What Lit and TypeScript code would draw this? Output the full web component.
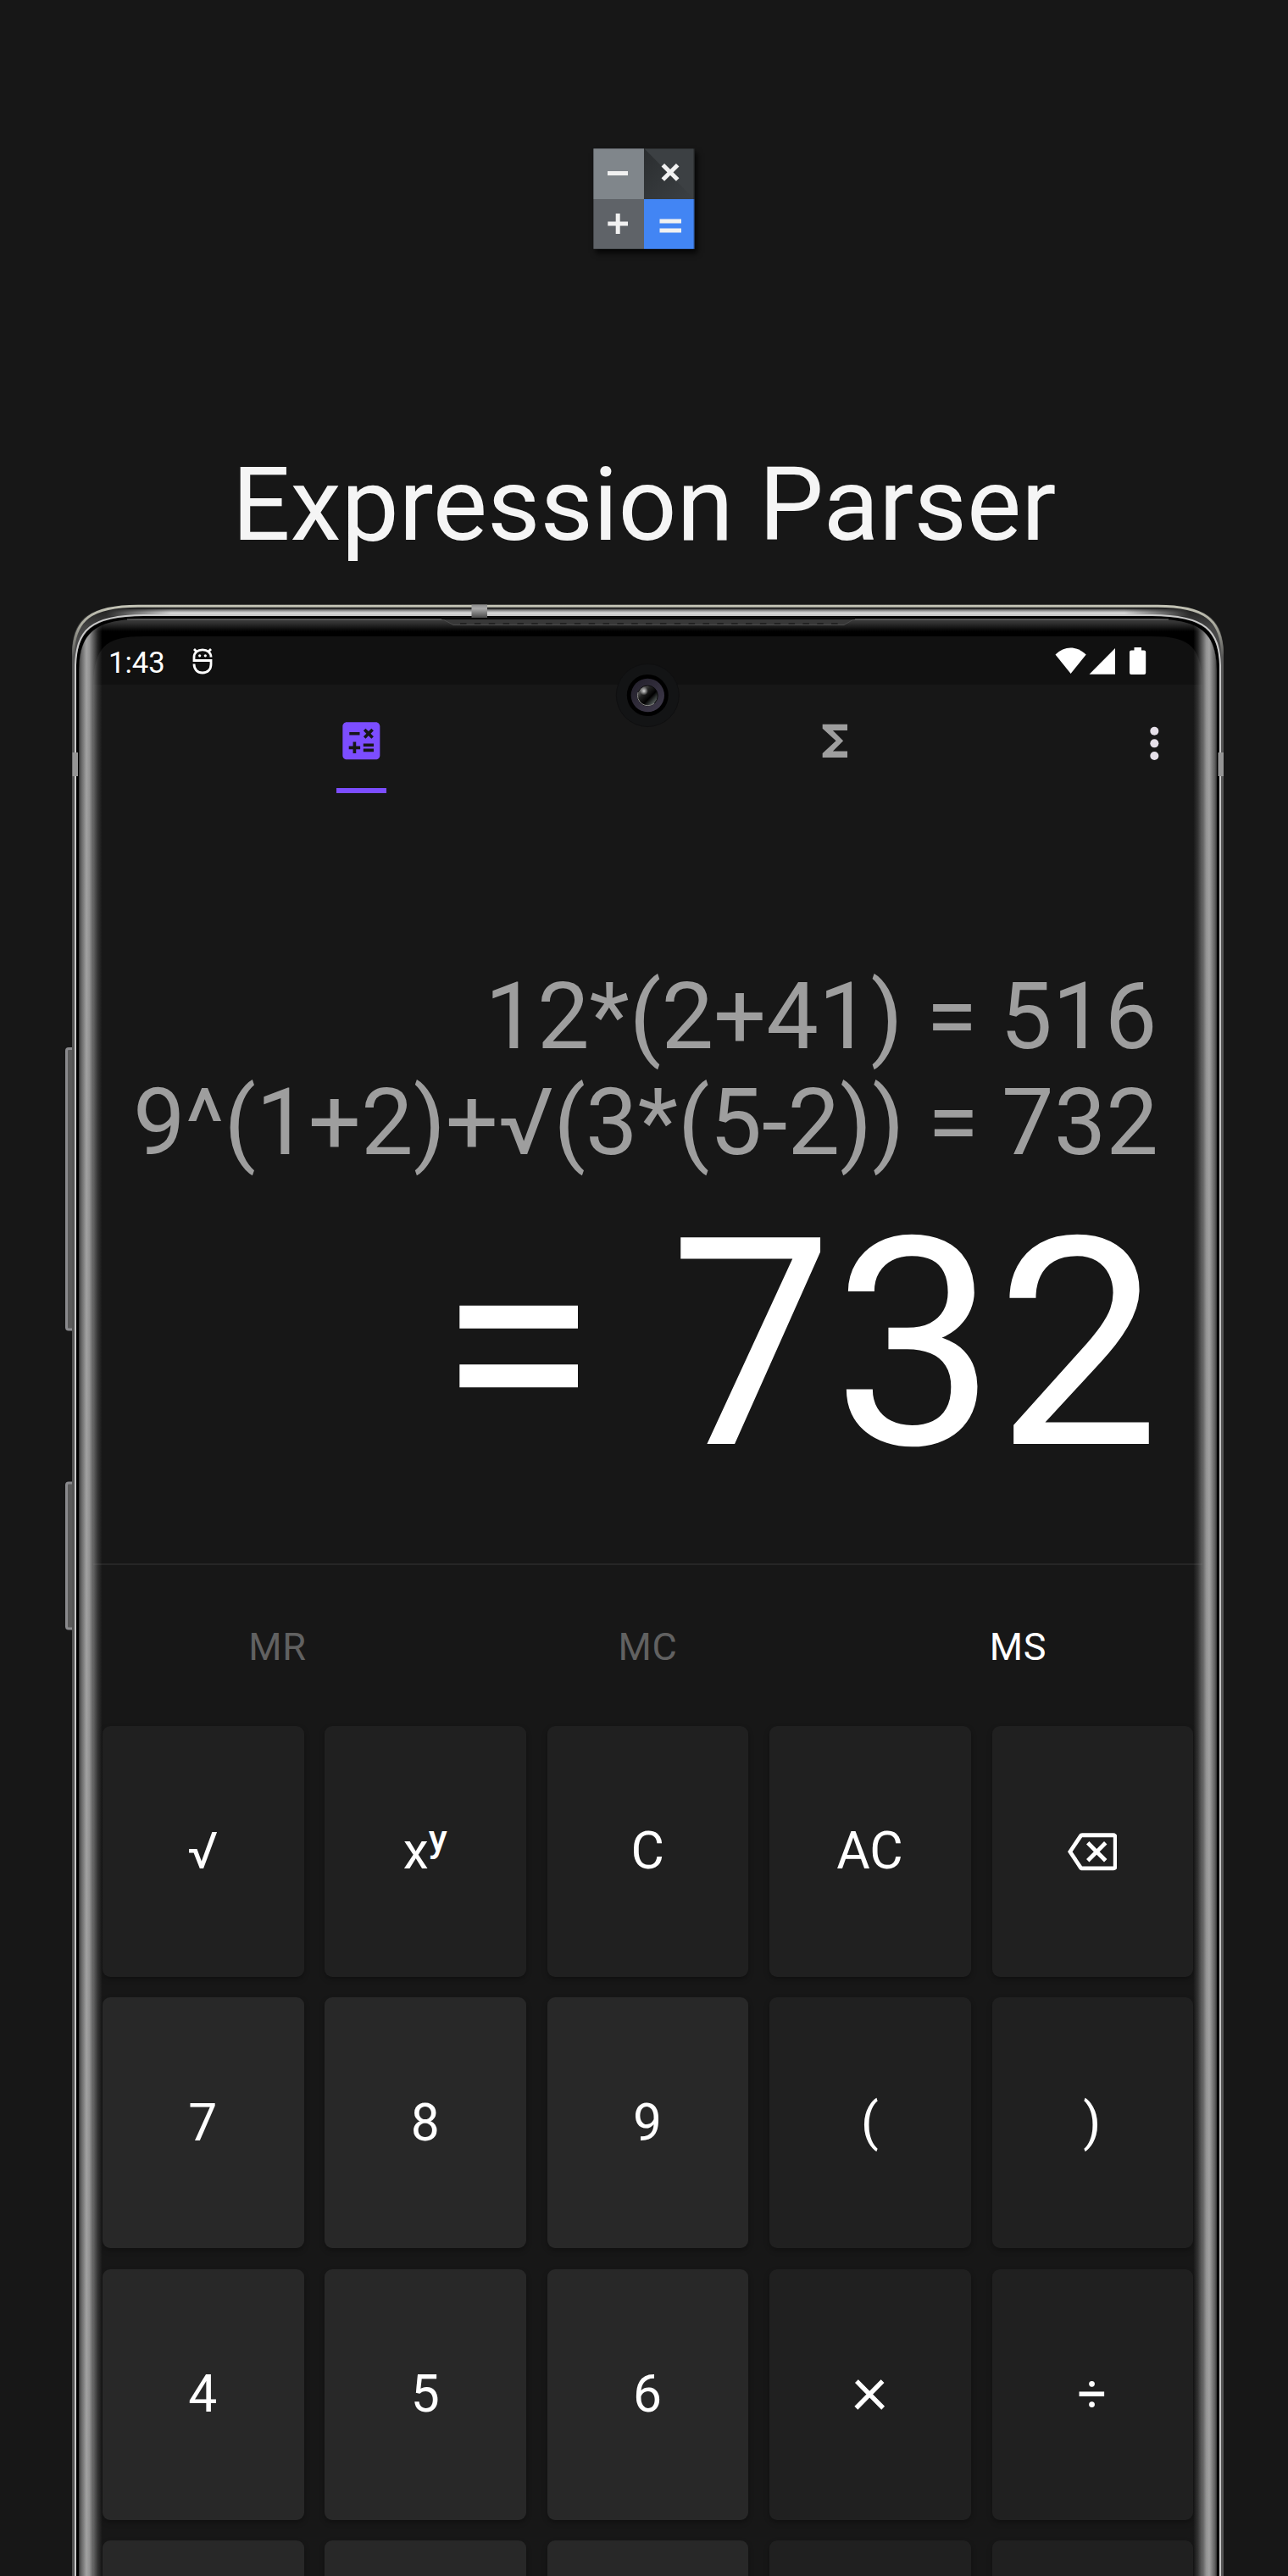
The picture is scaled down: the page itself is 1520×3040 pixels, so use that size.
import { LitElement, html, css, svg, nothing, type TemplateResult } from "lit";
import { customElement, property } from "lit/decorators.js";
import { classMap } from "lit/directives/class-map.js";

type Key = { label?: string; icon?: string; number?: boolean; power?: boolean; large?: boolean };

const KEYS: Key[] = [
  { label: "√" },
  { power: true },
  { label: "C" },
  { label: "AC" },
  { icon: "backspace" },
  { label: "7", number: true },
  { label: "8", number: true },
  { label: "9", number: true },
  { label: "(" },
  { label: ")" },
  { label: "4", number: true },
  { label: "5", number: true },
  { label: "6", number: true },
  { label: "×", large: true },
  { label: "÷" },
  { number: true },
  { number: true },
  { number: true },
  {},
  {},
];

const ICONS: Record<string, TemplateResult> = {
  calculator: svg`<path d="M19,3H5C3.89,3 3,3.89 3,5V19C3,20.1 3.9,21 5,21H19C20.1,21 21,20.1 21,19V5C21,3.9 20.1,3 19,3M13.03,7.06L14.09,6L15.5,7.41L16.91,6L17.97,7.06L16.56,8.47L17.97,9.88L16.91,10.94L15.5,9.53L14.09,10.94L13.03,9.88L14.44,8.47L13.03,7.06M6.25,7.72H11.25V9.22H6.25V7.72M11.5,16H9.5V18H8V16H6V14.5H8V12.5H9.5V14.5H11.5V16M18,17.25H13V15.75H18V17.25M18,14.75H13V13.25H18V14.75Z"/>`,
  sigma: svg`<path d="M18 4H6v2l6.5 6L6 18v2h12v-3h-7l5-5-5-5h7z"/>`,
  more: svg`<circle cx="12" cy="6" r="2.05"/><circle cx="12" cy="12" r="2.05"/><circle cx="12" cy="18" r="2.05"/>`,
  backspace: svg`<path d="M19,15.59L17.59,17L14,13.41L10.41,17L9,15.59L12.59,12L9,8.41L10.41,7L14,10.59L17.59,7L19,8.41L15.41,12L19,15.59M22,3A2,2 0 0,1 24,5V19A2,2 0 0,1 22,21H7C6.31,21 5.77,20.64 5.41,20.11L0,12L5.41,3.88C5.77,3.35 6.31,3 7,3H22M22,5H7L2.28,12L7,19H22V5Z"/>`,
};

@customElement("ui-icon")
class UiIcon extends LitElement {
  @property() name = "";
  static styles = css`
    :host { display: block; width: 58.7px; height: 58.7px; }
    .glyph { display: block; width: 100%; height: 100%; fill: currentColor; }
  `;
  render() {
    return html`<svg class="glyph" viewBox="0 0 24 24">${ICONS[this.name] ?? nothing}</svg>`;
  }
}

@customElement("app-logo")
class AppLogo extends LitElement {
  static styles = css`
    :host { display: block; flex: none; width: 119.4px; height: 119.4px; box-shadow: 3px 5px 6px rgba(0, 0, 0, 0.75); }
    .art { display: block; width: 100%; height: 100%; }
  `;
  render() {
    return html`<svg class="art" viewBox="0 0 119.4 119.4">
      <defs>
        <linearGradient id="fold" x1="0" y1="0" x2="1" y2="1">
          <stop offset="0" stop-color="#2a2d2f" /><stop offset="1" stop-color="#3c4043" />
        </linearGradient>
      </defs>
      <rect width="60" height="60" fill="#80868b" />
      <rect x="60" width="59.4" height="60" fill="#3c4043" />
      <path d="M60 0L119.4 60H60Z" fill="url(#fold)" />
      <rect y="60" width="60" height="59.4" fill="#5f6368" />
      <rect x="60" y="60" width="59.4" height="59.4" fill="#4285f4" />
      <path d="M0 .5H119.4M0 118.9H119.4M.5 0V119.4M118.9 0V119.4" stroke="#000" stroke-opacity=".3" />
      <g stroke="#f1f1f1" stroke-width="5" fill="none">
        <path d="M17 29.5H41" />
        <path d="M82.3 19.7L99.7 37.1M99.7 19.7L82.3 37.1" />
        <path d="M17.3 89H41M29.2 77V101" />
        <path d="M78.5 86H104M78.5 97H104" />
      </g>
    </svg>`;
  }
}

@customElement("status-bar")
class StatusBar extends LitElement {
  static styles = css`
    :host {
      display: flex; align-items: flex-start; box-sizing: border-box; height: 57px;
      padding: 12px 67px 0 19px; background: #111; color: #fff;
      font: 34.6px/40px Roboto, sans-serif;
    }
    .time { margin-top: -1px; }
    .debug { width: 24px; height: 32px; margin-left: 32px; margin-top: 1px; }
    .system { display: block; width: 108px; height: 34px; margin-left: auto; }
  `;
  render() {
    return html`
      <span class="time">1:43</span>
      <svg class="debug" viewBox="0 0 24 32" fill="none" stroke="#fff" stroke-width="2.8">
        <path d="M2 2L5 5M22 2L19 5" />
        <path d="M22 11.5C22 6.5 18 2.8 12 2.8S2 6.5 2 11.5V15.5H22V20C22 26 18 30 12 30S2 26 2 19.5" />
        <circle cx="8.7" cy="9.8" r="1.6" fill="#fff" stroke="none" />
        <circle cx="15.3" cy="9.8" r="1.6" fill="#fff" stroke="none" />
      </svg>
      <svg class="system" viewBox="0 0 108 34" fill="#fff">
        <path d="M0.5 9.5C11 -1.2 26 -1.2 36.7 9.5L18.6 32Z" />
        <path d="M40.5 32.7L71 2V32.7Z" />
        <path d="M90 4.5h3.5V1h8.5V4.5h3.2a2 2 0 0 1 2 2V31a2 2 0 0 1-2 2H90a2 2 0 0 1-2-2V6.5a2 2 0 0 1 2-2Z" />
      </svg>`;
  }
}

@customElement("key-pad")
class KeyPad extends LitElement {
  static styles = css`
    :host {
      display: grid; grid-template-columns: repeat(5, 237.6px); grid-auto-rows: 296px;
      gap: 24.4px 24.8px; padding: 0 12px;
      color: #fff; font: 60.5px/70px Roboto, sans-serif;
    }
    .key {
      display: flex; align-items: center; justify-content: center; border-radius: 9px;
      background: #202020; box-shadow: 0 3px 6px rgba(0, 0, 0, 0.3); box-sizing: border-box; padding-right: 1px;
    }
    .number { background: #282828; padding-top: 1px; }
    .large { padding-bottom: 11px; font-size: 80px; font-weight: 300; -webkit-text-stroke: 1px #fff; }
    .exponent { font-size: 45px; font-weight: 500; line-height: 0; vertical-align: 20px; }
  `;
  render() {
    return html`${KEYS.map(
      (k) => html`<div class=${classMap({ key: true, number: !!k.number, large: !!k.large })}>
        ${k.power ? html`<span>x<span class="exponent">y</span></span>` : nothing}
        ${k.icon ? html`<ui-icon name=${k.icon}></ui-icon>` : nothing}
        ${k.label ? html`<span>${k.label}</span>` : nothing}
      </div>`
    )}`;
  }
}

@customElement("device-frame")
class DeviceFrame extends LitElement {
  static styles = css`
    :host { display: block; pointer-events: none; }
    .art { display: block; width: 1380px; height: 2340px; }
  `;
  private side() {
    return svg`
      <rect x="93" y="730" width="30" height="2310" fill="url(#edge)" />
    `;
  }
  render() {
    const W = 1529;
    const shape = (x: number, y: number, cx: number, cy: number, ex: number, ey: number) =>
      `M${x} 3050V${y}C${x + 1.5} ${y - cy} ${x + cx} ${ey} ${ex} ${ey}H${W - ex}C${W - x - cx} ${ey} ${W - x - 1.5} ${y - cy} ${W - x} ${y}V3050`;
    const outer = shape(85, 768, 20, 38, 162, 713.5);
    const rim = shape(86.5, 770, 20, 38, 163, 715.3);
    const inner = shape(89, 785, 16, 40, 170, 726);
    const glass = shape(93, 790, 17, 42, 170, 730.5);
    return html`<svg class="art" viewBox="70 700 1380 2340">
      <defs>
        <linearGradient id="edge">
          <stop offset="0" stop-color="#333" />
          <stop offset=".07" stop-color="#5c5c5c" />
          <stop offset=".3" stop-color="#a2a2a2" />
          <stop offset=".42" stop-color="#9a9a9a" stop-opacity=".95" />
          <stop offset=".58" stop-color="#8a8a8a" stop-opacity=".65" />
          <stop offset=".75" stop-color="#888" stop-opacity=".25" />
          <stop offset=".92" stop-color="#888" stop-opacity="0" />
        </linearGradient>
        <linearGradient id="rim" gradientUnits="userSpaceOnUse" x1="0" y1="713" x2="0" y2="775">
          <stop offset="0" stop-color="#c6c6b8" /><stop offset=".4" stop-color="#aaaa9e" />
          <stop offset="1" stop-color="#555" />
        </linearGradient>
        <linearGradient id="body" gradientUnits="userSpaceOnUse" x1="0" y1="716" x2="0" y2="775">
          <stop offset="0" stop-color="#1c1c1c" /><stop offset=".4" stop-color="#444" />
          <stop offset="1" stop-color="#505050" />
        </linearGradient>
        <linearGradient id="silver" x2="0" y2="1">
          <stop offset="0" stop-color="#4a4a4a" /><stop offset=".3" stop-color="#a0a0a0" />
          <stop offset=".55" stop-color="#d6d6d6" /><stop offset="1" stop-color="#cacaca" />
        </linearGradient>
        <linearGradient id="fade" gradientUnits="userSpaceOnUse" x1="125" y1="0" x2="1404" y2="0">
          <stop offset="0" stop-color="#000" /><stop offset=".06" stop-color="#fff" />
          <stop offset=".94" stop-color="#fff" /><stop offset="1" stop-color="#000" />
        </linearGradient>
        <linearGradient id="bezel" gradientUnits="userSpaceOnUse" x1="0" y1="731" x2="0" y2="745">
          <stop offset="0" stop-color="#3c3c3c" /><stop offset=".3" stop-color="#303030" />
          <stop offset="1" stop-color="#000" />
        </linearGradient>
        <linearGradient id="mark" x2="0" y2="1">
          <stop offset="0" stop-color="#8a8a8a" /><stop offset=".3" stop-color="#aaa" />
          <stop offset="1" stop-color="#4a4a4a" />
        </linearGradient>
        <linearGradient id="iris" x2="1" y2="1">
          <stop offset="0" stop-color="#211e29" /><stop offset="1" stop-color="#403b4c" />
        </linearGradient>
        <linearGradient id="lens" x2="1" y2="1">
          <stop offset=".1" stop-color="#777" /><stop offset=".35" stop-color="#222" />
          <stop offset=".6" stop-color="#000" /><stop offset=".9" stop-color="#6c7674" />
        </linearGradient>
        <radialGradient id="glint">
          <stop offset="0" stop-color="#fff" stop-opacity=".8" /><stop offset="1" stop-color="#fff" stop-opacity="0" />
        </radialGradient>
        <mask id="ends"><rect x="70" y="700" width="1380" height="60" fill="url(#fade)" /></mask>
        <clipPath id="glass"><path d=${glass} /></clipPath>
      </defs>

      <path fill-rule="evenodd" fill="url(#body)" d=${outer + "Z" + glass + "Z"} />
      <path fill="none" stroke="url(#rim)" stroke-width="3" d=${rim} />
      <g mask="url(#ends)"><rect x="120" y="718.5" width="1289" height="8.5" fill="url(#silver)" /></g>
      <path fill="none" stroke="#000" stroke-width="4" d=${shape(91, 788, 17, 41, 170, 729)} />
      <path fill="none" stroke="#c8c8c8" stroke-width="2" d=${inner} />

      <path fill-rule="evenodd" fill="url(#bezel)" d=${`${glass}ZM110 3050V806C112 760 128 751 170 751H1359C1401 751 1417 760 1419 806V3050Z`} />
      <path fill="none" stroke="#777" stroke-width="1" d="M150 731H1379" />
      <g clip-path="url(#glass)">
        ${this.side()}
        <g transform="translate(1529 0) scale(-1 1)">${this.side()}</g>
      </g>

      <path d="M521 729.5L535 737.5H996L1009 729.5Z" fill="#383838" />
      <path d="M521 730L535 737.5H996L1009 730" fill="none" stroke="#4c4c4c" />
      <path d="M543 736H990" stroke="#222" stroke-width="2" stroke-dasharray="7.5 9.35" />
      <path d="M521 729.5H1009" stroke="#0a0a0a" stroke-width="3" />
      <rect x="556.5" y="713.5" width="18.5" height="15.5" fill="url(#mark)" />
      <rect x="85.5" y="888" width="6.5" height="28" fill="#959595" />
      <rect x="1437.5" y="888" width="6.5" height="28" fill="#959595" />

      <path d="M85 1237.5H81Q78.5 1237.5 78.5 1240V1566.5Q78.5 1569 81 1569H85" fill="#5a5a5a" stroke="#8a8a8d" stroke-width="3" />
      <path d="M85 1750H81Q78.5 1750 78.5 1752.5V1919.5Q78.5 1922 81 1922H85" fill="#5a5a5a" stroke="#8a8a8d" stroke-width="3" />

      <circle cx="764.3" cy="820.5" r="37" fill="#131415" stroke="#0f0f10" />
      <circle cx="764.3" cy="820.5" r="24.5" fill="#000" />
      <circle cx="764.3" cy="820.5" r="19.7" fill="url(#iris)" />
      <circle cx="764.3" cy="821" r="12" fill="url(#lens)" stroke="#0a0a0a" stroke-width="1" />
      <circle cx="760" cy="815.5" r="5" fill="url(#glint)" />
      <path d="M753 817A12 12 0 0 0 772 830" fill="none" stroke="#8a8a88" stroke-width="1" />
    </svg>`;
  }
}

@customElement("app-root")
class AppRoot extends LitElement {
  static styles = css`
    :host { display: block; }
    .page {
      box-sizing: border-box; width: 1520px; height: 3040px; overflow: hidden; background: #171717;
      display: flex; flex-direction: column; font-family: Roboto, sans-serif; color: #fff;
    }
    .hero { display: flex; flex: none; flex-direction: column; align-items: center; height: 713px; padding-top: 175px; box-sizing: border-box; }
    .title { margin: 230.6px 0 0 0; font-size: 121.2px; line-height: 142px; font-weight: 400; color: #f5f5f5; white-space: nowrap; }
    .device { position: relative; flex: none; padding: 38px 100px 0 109px; }
    .frame { position: absolute; left: 70px; top: -13px; }
    .screen { display: flex; flex-direction: column; width: 1311px; }
    .tabs { display: flex; height: 128px; padding-left: 38px; }
    .tab { display: flex; flex-direction: column; align-items: center; width: 559px; padding-top: 37px; box-sizing: border-box; color: #9e9e9e; }
    .active { color: #7c4dff; }
    .indicator { width: 58.7px; height: 6px; margin-top: 26.3px; background: #7c4dff; }
    .more { margin: 39.5px 0 0 67.6px; color: #e6e0e9; }
    .output { display: flex; flex-direction: column; align-items: flex-end; height: 908.5px; padding: 201px 53px 0 0; box-sizing: border-box; white-space: nowrap; }
    .past { font-size: 109.7px; line-height: 125px; color: #9e9e9e; }
    .older { margin-right: 1.7px; }
    .result { margin: -0.2px -1.5px 0 0; font-size: 343px; line-height: 400px; }
    .memory { display: flex; height: 192.5px; box-sizing: border-box; border-top: 2px solid #262626; font-size: 45px; line-height: 52px; letter-spacing: 0.8px; }
    .slot { flex: 1; text-align: center; padding-top: 71px; color: #616161; }
    .enabled { color: #fff; }
  `;
  render() {
    return html`<main class="page">
      <header class="hero">
        <app-logo></app-logo>
        <h1 class="title">Expression Parser</h1>
      </header>
      <section class="device">
        <div class="screen">
          <status-bar></status-bar>
          <nav class="tabs">
            <div class="tab active"><ui-icon name="calculator"></ui-icon><div class="indicator"></div></div>
            <div class="tab"><ui-icon name="sigma"></ui-icon></div>
            <ui-icon class="more" name="more"></ui-icon>
          </nav>
          <div class="output">
            <div class="past older">12*(2+41) = 516</div>
            <div class="past">9^(1+2)+√(3*(5-2)) = 732</div>
            <div class="result">= 732</div>
          </div>
          <div class="memory">
            <span class="slot">MR</span><span class="slot">MC</span><span class="slot enabled">MS</span>
          </div>
          <key-pad></key-pad>
        </div>
        <device-frame class="frame"></device-frame>
      </section>
    </main>`;
  }
}
